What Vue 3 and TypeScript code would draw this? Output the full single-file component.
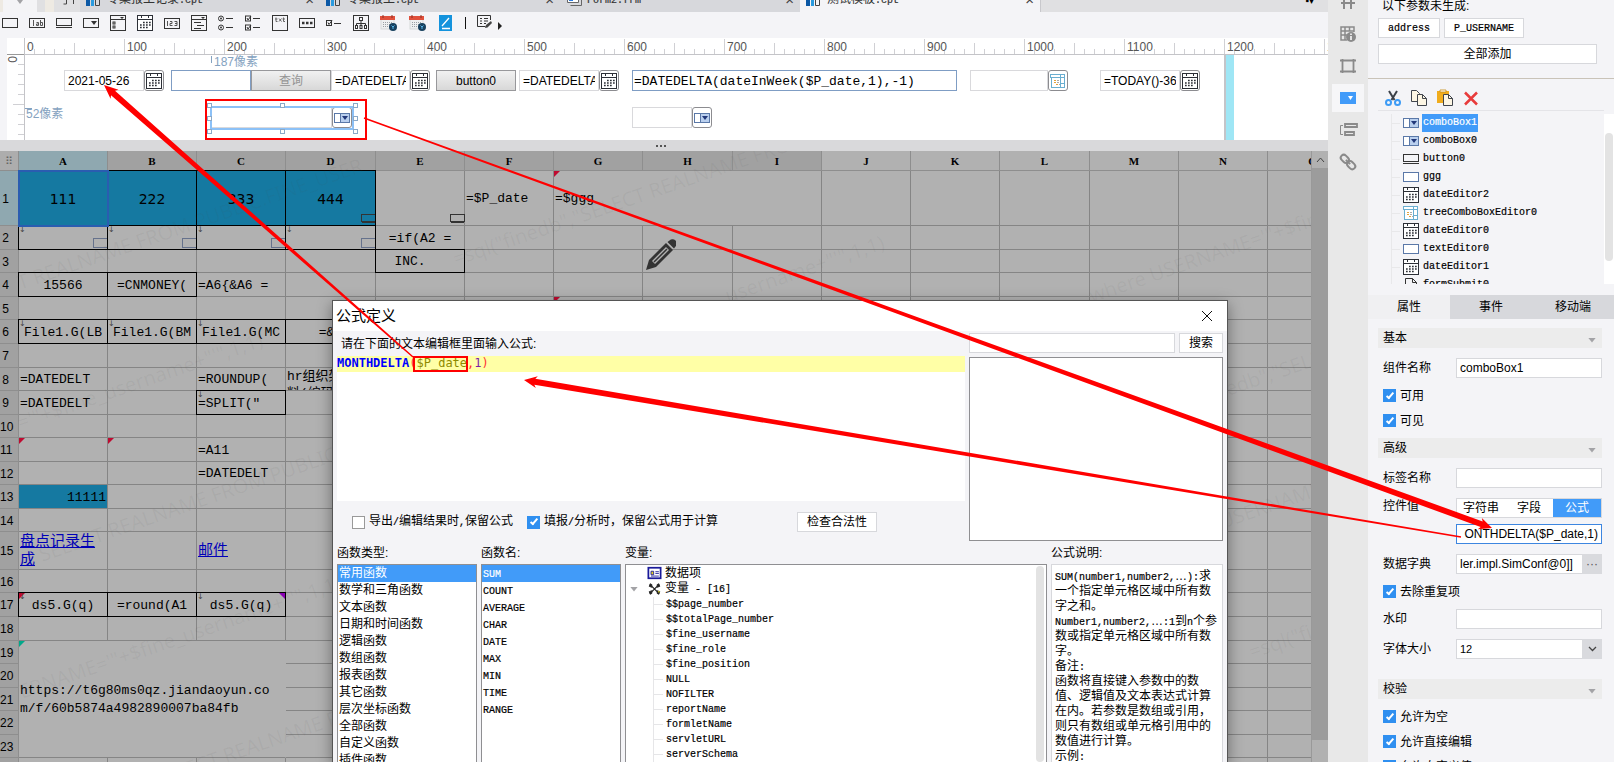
<script setup lang="ts">
import { h } from 'vue'

const Mix = (props: { t: string }) =>
  (props.t.match(/[\x20-\x7e]+|[^\x20-\x7e]+/g) ?? []).map((s) =>
    /^[\x20-\x7e]/.test(s) ? h('span', { class: 'latin' }, s) : h('span', s),
  )
Mix.props = ['t']

const dark = 'fill="none" stroke="#333" stroke-width="1"'
const calendar = `<rect x=".5" y=".5" width="15" height="15" fill="#fff" stroke="#2c2f36"/><path d="M1 4.500h14M4.500 0v3M11.500 0v3" stroke="#2c2f36" fill="none"/><path d="M6 7.500h8M3 10h11M3 12.500h8" stroke="#2c2f36" stroke-width="1.600" stroke-dasharray="1.700 1.300" fill="none"/>`
const reportCalendar = `<rect x="1" y="4" width="13" height="10" fill="#eef0f0" stroke="#d5d9da"/><rect x="0" y="1" width="15" height="4" fill="#e0503c"/><path d="M3 0v3M12 0v3" stroke="#8c2f22"/><path d="M3 7.500h9M3 9.500h7M3 11.500h7" stroke="#9aa0a4" stroke-dasharray="1 1"/><circle cx="13" cy="12" r="4" fill="#17405e"/><path d="M11.500 10.500l1.500 1.500 1.500-1.500M13 12v2" stroke="#58b5e8" fill="none"/>`
const icons: Record<string, string> = {
  text: `<rect x=".5" y="3.500" width="15" height="9" ${dark}/>`,
  label: `<rect x=".5" y="3.500" width="15" height="9" ${dark}/><path d="M4.500 5v6M7.500 7.500h2v3h-2v-1.500h2M11.500 5v5.500h2v-3h-2" fill="none" stroke="#555"/>`,
  button: `<rect x=".5" y="3.500" width="15" height="7" ${dark}/><path d="M0 12.500h16" ${dark}/>`,
  combo: `<rect x=".5" y="3.500" width="15" height="9" ${dark}/><path d="M8 6h6l-3 4z" fill="#333"/>`,
  check: `<rect x=".5" y="0.500" width="15" height="15" ${dark}/><path d="M1 4.500h14" ${dark}/><path d="M10 2h4l-2 2z" fill="#333"/><rect x="3" y="7" width="2" height="2" ${dark}/><rect x="3" y="11" width="2" height="2" ${dark}/>`,
  calendar,
  number: `<rect x=".5" y="3.500" width="15" height="10" ${dark}/><path d="M3.500 6v5M6 6.500h2v2h-2v2h2.500M10.500 6.500h2.500v4h-2.500M11 8.500h2" fill="none" stroke="#555"/>`,
  list: `<rect x=".5" y="0.500" width="15" height="15" ${dark}/><path d="M1 4.500h14M3 7.500h7M6 10.500h7M3 13.500h7" ${dark}/><path d="M10 2h4l-2 2z" fill="#333"/>`,
  radios: `<circle cx="3" cy="3.500" r="2.500" ${dark}/><circle cx="3" cy="12.500" r="2.500" ${dark}/><circle cx="3" cy="3.500" r="1" fill="#333"/><circle cx="3" cy="12.500" r="1" fill="#333"/><path d="M8 3.500h7M8 12.500h7" ${dark}/>`,
  checks: `<rect x=".5" y="1" width="5" height="5" ${dark}/><rect x=".5" y="10" width="5" height="5" ${dark}/><path d="M2 3l1 2 3-4M2 12l1 2 3-4M8 3.500h7M8 12.500h7" ${dark}/>`,
  area: `<rect x=".5" y="0.500" width="15" height="15" ${dark}/><path d="M4 2.500v4h1.500M3 4h2.500M7 3.500l2.500 3M9.500 3.500l-2.500 3M11.500 2.500v4h1.500M10.500 4h2.500" fill="none" stroke="#666"/>`,
  password: `<rect x=".5" y="3.500" width="15" height="9" ${dark}/><path d="M3 8h2.500M7 8h2.500M11 8h2.500" stroke="#333" stroke-width="2.500"/>`,
  single: `<rect x=".5" y="5.500" width="5" height="5" ${dark}/><path d="M2 7.500l1 2 3-4M8 8.500h7" ${dark}/>`,
  tree: `<rect x=".5" y="0.500" width="15" height="15" ${dark}/><rect x="6.500" y="2.500" width="3" height="3" ${dark}/><path d="M8 6v5M3.500 11V8.500h9V11" ${dark}/><rect x="2.500" y="10.500" width="2" height="3" ${dark}/><rect x="7" y="10.500" width="2" height="3" ${dark}/><rect x="11.500" y="10.500" width="2" height="3" ${dark}/>`,
  reportCalendar,
  sign: `<rect x="1" y="0" width="13" height="16" fill="#1493dd"/><path d="M4 11L11 3M4 13.500h8" stroke="#fff" stroke-width="1.300"/>`,
  form: `<path d="M13.500 5V.5h-13v11h8" ${dark}/><path d="M3 3.500h2M7 3.500h4M3 6h2M7 6h4M3 8.500h2M7 8.500h2" ${dark}/><path d="M8 13l1-3 5-4 1 2-4.500 4.500z" fill="#444"/>`,
  comboBlue: `<rect x=".5" y="3.500" width="15" height="9" fill="#fff" stroke="#5a78a8"/><rect x="6.500" y="3.500" width="9" height="9" fill="#b9cfee" stroke="#5a78a8"/><path d="M8 6h6l-3 4z" fill="#22387a"/>`,
  textBlue: `<rect x=".5" y="3.500" width="15" height="9" fill="#fff" stroke="#5a78a8"/>`,
  treeCombo: `<rect x=".5" y="1.500" width="10" height="3" fill="#fff" stroke="#6aaed0"/><rect x="10.500" y="1.500" width="4" height="3" fill="#fff" stroke="#6aaed0"/><rect x="1.500" y="4.500" width="13" height="10" fill="#fff" stroke="#6aaed0"/><path d="M4 7.500h2M4 9.500h2M6 11.500h2" stroke="#e5a33a"/><path d="M7 7.500h2M7 9.500h2M9 11.500h1" stroke="#aaa"/><path d="M10.500 5v9M11 10.500h4" stroke="#6aaed0"/>`,
  submit: `<path d="M2.500 16V1.500h7l4 4V16M9.500 1.500v4h4" ${dark}/>`,
  cut: `<path d="M4 1l5.500 9M12 1L6.500 10" stroke="#3b4048" stroke-width="2"/><circle cx="3.500" cy="12.500" r="2.500" fill="none" stroke="#3d9bf5" stroke-width="2"/><circle cx="12.500" cy="12.500" r="2.500" fill="none" stroke="#3d9bf5" stroke-width="2"/>`,
  copy: `<path d="M.5 11.500V.5h5l3 3v8z" fill="#fdf6e4" stroke="#40454d"/><path d="M6.500 15.500v-11h5l4 4v7z" fill="#fdf6e4" stroke="#40454d"/><path d="M11.500 4.500v4h4" fill="none" stroke="#40454d"/>`,
  paste: `<path d="M0 1h12v12H0z" fill="#f0ac1c"/><path d="M3 0h6v2H3z" fill="#fff" stroke="#c58a10" stroke-width=".8"/><path d="M6.500 15.500v-11h5l4 4v7z" fill="#fdf6e4" stroke="#40454d"/><path d="M11.500 4.500v4h4" fill="none" stroke="#40454d"/>`,
  remove: `<path d="M2 2.500l12 12M14 2.500l-12 12" stroke="#e83b3b" stroke-width="2.500"/>`,
  cpt: `<path d="M0 2h4v12H0z" fill="#0c58a5"/><path d="M5 6h3v8H5z" fill="#2a9be0"/><path d="M9.500 4.500h4v9h-4z" fill="none" stroke="#444"/>`,
  frm: `<path d="M1.500 1.500h11v9h-11z" fill="#fff" stroke="#666"/><path d="M4.500 13.500h11v-9" fill="none" stroke="#666"/><path d="M3 6h4v3H3z" fill="#2a7be0"/>`,
  grid: `<path d="M0 8.500h5M8 8.500h7M4.500 0v14h-3M11.500 0v14" fill="none" stroke="#444"/>`,
  cells: `<path d="M1 4h14M1 9h14M4 0v15M11 0v15" fill="none" stroke="#8a8a8a" stroke-width="2"/>`,
  cellInfo: `<path d="M14 6V1H1v13h6M1 5h13M1 9h6M5 1v13M9.500 1v4" fill="none" stroke="#8a8a8a" stroke-width="1.500"/><circle cx="11" cy="11" r="5" fill="#8a8a8a"/><path d="M11 10v4M11 7.500v1.500" stroke="#fff" stroke-width="1.500"/>`,
  frame: `<path d="M2.500 1v14M13.500 1v14M0 2.500h16M0 13.500h16" fill="none" stroke="#8a8a8a" stroke-width="1.800"/>`,
  widget: `<path d="M0 2h16v12H0z" fill="#419bf9"/><path d="M8 6h5l-2.500 4z" fill="#fff"/>`,
  align: `<path d="M3 3.500H.5v9H3" fill="none" stroke="#8a8a8a"/><path d="M5 2h12v3H5zM5 10h9v3H5z" fill="none" stroke="#8a8a8a" stroke-width="1.800"/>`,
  link: `<g transform="rotate(45 8 8)" fill="none" stroke="#8a8a8a" stroke-width="2"><rect x="-1" y="5" width="9" height="6" rx="3"/><rect x="8" y="5" width="9" height="6" rx="3"/><path d="M5 8h6"/></g>`,
  data: `<rect x="1" y="2" width="14" height="12" fill="#fff" stroke="#1a1a9a" stroke-width="2"/><path d="M4 6h3v4H4z" fill="#e8d21c" stroke="#1a1a9a"/><path d="M9 6.500h4M9 8.500h4M4 11.500h9" stroke="#1a1a9a"/>`,
  vars: `<path d="M5 5l6 6M11 5l-6 6" stroke="#222" stroke-width="1.500"/><path d="M3 2l2 1v3l-3-1zM13 2l-2 1v3l3-1zM3 14l2-1v-3l-3 1zM13 14l-2-1v-3l3 1z" fill="#222" stroke="#222"/><circle cx="13" cy="11" r="1" fill="#c7c02c"/>`,
}

const fileTabs = [
  { icon: 'cpt', name: '专案报工记录.cpt' },
  { icon: 'cpt', name: '专案报工.cpt' },
  { icon: 'frm', name: 'Form2.frm' },
  { icon: 'cpt', name: '测试模板.cpt', active: true },
]
const tools = ['text', 'label', 'button', 'combo', 'check', 'calendar', 'number', 'list', 'radios', 'checks', 'area', 'password', 'single', 'tree', 'reportCalendar', 'reportCalendar', 'sign']

const minorTicks = Array.from({ length: 131 }, (_, i) => i)
const majorTicks = Array.from({ length: 14 }, (_, i) => i * 100)

interface Field { id: string; kind: 'edit' | 'plain' | 'wide' | 'button'; x: number; y: number; w: number; value?: string; icon?: string; off?: boolean }
const fields: Field[] = [
  { id: 'dateEditor0', kind: 'edit', x: 39, y: 15, w: 100, value: '2021-05-26', icon: 'calendar' },
  { id: 'textEditor0', kind: 'plain', x: 146, y: 15, w: 80, value: '' },
  { id: 'formSubmit0', kind: 'button', x: 226, y: 15, w: 80, value: '查询', off: true },
  { id: 'dateEditor1', kind: 'edit', x: 306, y: 15, w: 99, value: '=DATEDELTA()', icon: 'calendar' },
  { id: 'button0', kind: 'button', x: 411, y: 15, w: 80, value: 'button0' },
  { id: 'dateEditor3', kind: 'edit', x: 494, y: 15, w: 100, value: '=DATEDELTA()', icon: 'calendar' },
  { id: 'ggg', kind: 'wide', x: 607, y: 15, w: 325, value: '=DATEDELTA(dateInWeek($P_date,1),-1)' },
  { id: 'treeComboBoxEditor0', kind: 'edit', x: 945, y: 15, w: 98, value: '', icon: 'treeCombo' },
  { id: 'dateEditor2', kind: 'edit', x: 1075, y: 15, w: 100, value: '=TODAY()-36', icon: 'calendar' },
  { id: 'comboBox1', kind: 'edit', x: 186, y: 52, w: 141, value: '', icon: 'comboBlue' },
  { id: 'comboBox0', kind: 'edit', x: 607, y: 52, w: 80, value: '', icon: 'comboBlue' },
]
const handles = [
  [0, 0], [73, 0], [146, 0], [0, 13], [146, 13], [0, 26], [73, 26], [146, 26],
]

const cols = 'ABCDEFGHIJKLMNO'.split('')
const colWidths = [89, 89, 89, 90, 89, 89, 89, 90, 89, 89, 89, 90, 89, 89, 90]
const rowHeights = [55, 24, 23, 24, 23, 24, 24, 23, 24, 23, 24, 23, 24, 23, 38, 23, 24, 24, 23, 24, 23, 24, 23, 24]
interface Cell { t?: string; c?: string; link?: boolean; cs?: number; rs?: number; mark?: string; down?: boolean; box?: 'btn' | 'txt' }
const cells: Record<string, Cell> = {
  A1: { t: '111', c: 'blue big selected' },
  B1: { t: '222', c: 'blue big boxed' },
  C1: { t: '333', c: 'blue big boxed' },
  D1: { t: '444', c: 'blue big boxed', box: 'btn' },
  E1: { box: 'btn' },
  F1: { t: '=$P_date' },
  G1: { t: '=$ggg', cs: 3, mark: 'red' },
  A2: { c: 'boxed', down: true, box: 'txt' },
  B2: { c: 'boxed', down: true, box: 'txt' },
  C2: { c: 'boxed', down: true, box: 'txt' },
  D2: { c: 'boxed', down: true, box: 'txt' },
  E2: { t: '=if(A2 =', c: 'center' },
  E3: { t: 'INC.', c: 'boxed center back' },
  A4: { t: '15566', c: 'boxed center' },
  B4: { t: '=CNMONEY(', c: 'boxed center' },
  C4: { t: '=A6{&A6 =' },
  G5: { mark: 'red' },
  A6: { t: 'File1.G(LB', c: 'boxed center', down: true },
  B6: { t: 'File1.G(BM', c: 'boxed center', down: true },
  C6: { t: 'File1.G(MC', c: 'boxed center', down: true },
  D6: { t: '=&A', c: 'boxed center' },
  A8: { t: '=DATEDELT' },
  C8: { t: '=ROUNDUP(' },
  D8: { t: 'hr组织架\n料(编码)', c: 'tight' },
  A9: { t: '=DATEDELT' },
  C9: { t: '=SPLIT("', c: 'boxed', down: true },
  A11: { mark: 'red' },
  B11: { mark: 'red' },
  C11: { t: '=A11' },
  C12: { t: '=DATEDELT' },
  A13: { t: '11111', c: 'blue end' },
  A15: { t: '盘点记录生\n成', link: true },
  C15: { t: '邮件', link: true },
  A17: { t: 'ds5.G(q)', c: 'boxed center', down: true, mark: 'red' },
  B17: { t: '=round(A1', c: 'boxed center' },
  C17: { t: 'ds5.G(q)', c: 'boxed center', down: true, mark: 'purple' },
  A19: { t: 'https://t6g80ms0qz.jiandaoyun.co\nm/f/60b5874a4982890007ba84fb', cs: 3, rs: 5, mark: 'teal', c: 'open' },
}
const covered = (col: string, row: number) =>
  (row === 1 && 'HI'.includes(col)) ||
  (row >= 19 && row <= 23 && ('BC'.includes(col) || (col === 'A' && row > 19)))
const cellAt = (col: string, row: number): Cell => cells[col + row] ?? {}

const watermarks = [
  { x: 20, y: 139, t: 'T REALNAME FROM PUBLIC.FINE_USER' },
  { x: 20, y: 279, t: `='"+$fine_username+"'",1,1)` },
  { x: 42, y: 411, t: 'SELECT REALNAME FROM PUBLIC.FINE' },
  { x: 22, y: 548, t: `ERNAME='"+$fine_username+"'",1,1)` },
  { x: 188, y: 625, t: 'ECT REALNAME FROM PUBLIC' },
  { x: 456, y: 115, t: '=sql("finedb","SELECT REALNAME FROM' },
  { x: 728, y: 152, t: `username+"'",1,1)` },
  { x: 1092, y: 152, t: `where USERNAME='"+$fine` },
  { x: 1205, y: 253, t: `finedb","SELECT REAL` },
  { x: 1222, y: 378, t: 'USERNAME' },
  { x: 1252, y: 508, t: '=sql("finedb"' },
]

const functionTypes = ['常用函数', '数学和三角函数', '文本函数', '日期和时间函数', '逻辑函数', '数组函数', '报表函数', '其它函数', '层次坐标函数', '全部函数', '自定义函数', '插件函数']
const functionNames = ['SUM', 'COUNT', 'AVERAGE', 'CHAR', 'DATE', 'MAX', 'MIN', 'TIME', 'RANGE']
const variables = ['$$page_number', '$$totalPage_number', '$fine_username', '$fine_role', '$fine_position', 'NULL', 'NOFILTER', 'reportName', 'formletName', 'servletURL', 'serverSchema']
const description = ['SUM(number1,number2,…):求', '一个指定单元格区域中所有数', '字之和。', 'Number1,number2,…:1到n个参', '数或指定单元格区域中所有数', '字。', '备注:', '函数将直接键入参数中的数', '值、逻辑值及文本表达式计算', '在内。若参数是数组或引用，', '则只有数组或单元格引用中的', '数值进行计算。', '示例:']

const widgets = [
  ['comboBlue', 'comboBox1'], ['comboBlue', 'comboBox0'], ['button', 'button0'], ['textBlue', 'ggg'],
  ['calendar', 'dateEditor2'], ['treeCombo', 'treeComboBoxEditor0'], ['calendar', 'dateEditor0'],
  ['textBlue', 'textEditor0'], ['calendar', 'dateEditor1'], ['submit', 'formSubmit0'],
]
const railIcons = ['cells', 'cellInfo', 'frame', 'widget', 'align', 'link']

function arrow(x1: number, y1: number, x2: number, y2: number, head: number, w: number): string {
  const len = Math.hypot(x2 - x1, y2 - y1)
  const ux = (x2 - x1) / len
  const uy = (y2 - y1) / len
  const at = (back: number, side: number) => `${x2 - ux * back - uy * side},${y2 - uy * back + ux * side}`
  return [at(len, 0.7), at(head - 2, w / 2), at(head, w), at(0, 0), at(head, -w), at(head - 2, -w / 2), at(len, -0.7)].join(' ')
}
const arrows = [
  arrow(413, 357, 104, 85, 14, 6),
  arrow(364, 118, 1492, 528, 13, 6),
  arrow(1461, 537, 524, 380, 13, 6),
]
</script>

<template>
  <div class="app">
    <main class="main">
      <nav class="file-tabs">
        <button class="tab-start" aria-label="Menu"><i class="caret"></i></button>
        <div class="tab-tool"><svg class="ic" viewBox="0 0 16 16" v-html="icons.grid" /></div>
        <div v-for="f in fileTabs" :key="f.name" class="file-tab" :class="{ active: f.active }">
          <svg class="ic" viewBox="0 0 16 16" v-html="icons[f.icon]" />
          <span class="file-name"><Mix :t="f.name" /></span>
          <button class="close" aria-label="Close">×</button>
        </div>
        <div class="tab-rest"><span>▪▾</span></div>
      </nav>
      <div class="toolbar">
        <button v-for="(t, i) in tools" :key="i" class="tool" :class="{ spaced: i > 14 }" :aria-label="t"><svg class="ic" viewBox="0 0 16 16" v-html="icons[t]" /></button>
        <i class="bar"></i>
        <button class="tool" aria-label="form"><svg class="ic" viewBox="0 0 16 16" v-html="icons.form" /></button>
        <i class="caret-right"></i>
      </div>

      <section class="designer">
        <div class="ruler-left">
          <svg width="17" height="102">
            <path d="M0 16.500h17" stroke="#999" />
            <path d="M11 26.500h6M11 36.500h6M11 46.500h6M11 56.500h6M6 66.500h11M11 76.500h6M11 86.500h6M11 96.500h6" stroke="#d0d0d4" />
            <text x="0" y="0" transform="translate(1 18) rotate(90)" class="rule-text">0</text>
          </svg>
        </div>
        <div class="canvas-side">
          <svg class="ruler" height="17" width="100%">
            <path v-for="n in minorTicks" :key="n" :d="`M${n * 10 - 1 + 0.5} ${n % 10 === 0 ? 1 : n % 5 === 0 ? 5 : 11}v16`" stroke="#d0d0d4" />
            <text v-for="n in majorTicks" :key="n" :x="n + 2" y="13" class="rule-text">{{ n }}</text>
            <path d="M0 16.500h1400" stroke="#c4c4c8" />
          </svg>
          <div class="canvas">
            <span class="dim dim-x">187像素</span>
            <span class="dim dim-y">52像素</span>
            <template v-for="f in fields" :key="f.id">
              <button v-if="f.kind === 'button'" class="place btn" :class="{ off: f.off }" :style="{ left: f.x + 'px', top: f.y + 'px', width: f.w + 'px' }">{{ f.value }}</button>
              <input v-else-if="f.kind !== 'edit'" class="place plain" :class="f.kind" :aria-label="f.id" :value="f.value" :style="{ left: f.x + 'px', top: f.y + 'px', width: f.w + 'px' }" />
              <div v-else class="place edit" :style="{ left: f.x + 'px', top: f.y + 'px', width: f.w + 'px' }">
                <input :aria-label="f.id" :value="f.value" />
                <button :aria-label="f.id + ' open'"><svg class="ic" viewBox="0 0 16 16" v-html="icons[f.icon!]" /></button>
              </div>
            </template>
            <div class="selection">
              <i v-for="(p, i) in handles" :key="i" :style="{ left: p[0] + 'px', top: p[1] + 'px' }"></i>
            </div>
            <div class="edge"></div>
          </div>
        </div>
      </section>
      <div class="splitter"><i></i><i></i><i></i></div>

      <section class="sheet">
        <div class="sheet-view">
          <table class="grid">
            <colgroup>
              <col class="head-col" />
              <col v-for="(w, i) in colWidths" :key="i" :style="{ width: w + 'px' }" />
            </colgroup>
            <thead>
              <tr>
                <th class="corner">⠿</th>
                <th v-for="(c, i) in cols" :key="c" :class="{ on: i === 0, pale: i > 8 }">{{ c }}</th>
              </tr>
            </thead>
            <tbody>
              <tr v-for="(rh, r) in rowHeights" :key="r" :style="{ height: rh + 'px' }">
                <th :class="{ on: r === 0 }">{{ r + 1 }}</th>
                <template v-for="c in cols" :key="c">
                  <td v-if="!covered(c, r + 1)" :class="cellAt(c, r + 1).c" :colspan="cellAt(c, r + 1).cs" :rowspan="cellAt(c, r + 1).rs">
                    <div v-if="cellAt(c, r + 1).t" class="cell" :style="{ maxHeight: rh * (cellAt(c, r + 1).rs ?? 1) - 1 + 'px' }">
                      <a v-if="cellAt(c, r + 1).link" href="#">{{ cellAt(c, r + 1).t }}</a>
                      <template v-else>{{ cellAt(c, r + 1).t }}</template>
                    </div>
                    <i v-if="cellAt(c, r + 1).mark" class="mark" :class="cellAt(c, r + 1).mark"></i>
                    <i v-if="cellAt(c, r + 1).down" class="down">↓</i>
                    <i v-if="cellAt(c, r + 1).box" class="mini" :class="cellAt(c, r + 1).box"></i>
                  </td>
                </template>
              </tr>
            </tbody>
          </table>
          <svg class="watermarks" width="100%" height="100%">
            <text v-for="(w, i) in watermarks" :key="i" :transform="`translate(${w.x} ${w.y}) rotate(-19)`">{{ w.t }}</text>
          </svg>
          <svg class="pencil" viewBox="0 0 30 31" width="30" height="31">
            <path d="M0 31L3 21L20 4l7 7L10 28z" fill="#333" />
            <path d="M6 22L20 8l3 3L9 25z" fill="#b1b1b1" />
            <path d="M8 23L21 10" stroke="#333" stroke-width="1.500" />
            <path d="M21.500 3l2-1.500a4 4 0 0 1 6 6L28 9.500z" fill="#333" />
          </svg>
        </div>
        <div class="scrollbar"><button aria-label="Scroll up"><svg width="9" height="6"><path d="M1 5l3.500-4L8 5" fill="none" stroke="#444" /></svg></button><i></i></div>
      </section>
    </main>

    <nav class="rail">
      <button v-for="r in railIcons" :key="r" :class="{ on: r === 'widget' }" :aria-label="r"><svg class="ic" viewBox="0 0 16 16" v-html="icons[r]" /></button>
    </nav>

    <aside class="panel">
      <div class="params">
        <p>以下参数未生成:</p>
        <div class="chips"><button><span class="latin">address</span></button><button><span class="latin">P_USERNAME</span></button></div>
        <button class="add-all">全部添加</button>
      </div>
      <div class="widget-tools">
        <button v-for="n in ['cut', 'copy', 'paste', 'remove']" :key="n" :aria-label="n"><svg class="ic" viewBox="0 0 16 16" v-html="icons[n]" /></button>
      </div>
      <div class="widget-box">
        <ul class="widget-tree">
          <li v-for="(w, i) in widgets" :key="w[1]" :class="{ on: i === 0 }"><svg class="ic" viewBox="0 0 16 16" v-html="icons[w[0]]" /><span class="latin">{{ w[1] }}</span></li>
        </ul>
        <div class="thumb"><i></i></div>
      </div>
      <div class="panel-tabs"><button class="on">属性</button><button>事件</button><button>移动端</button></div>
      <form class="props" @submit.prevent>
        <h3>基本<i class="caret"></i></h3>
        <div class="row"><label for="p-name">组件名称</label><input id="p-name" value="comboBox1" /></div>
        <label class="tick"><input type="checkbox" checked />可用</label>
        <label class="tick"><input type="checkbox" checked />可见</label>
        <h3>高级<i class="caret"></i></h3>
        <div class="row"><label for="p-label">标签名称</label><input id="p-label" value="" /></div>
        <div class="row first">
          <label for="p-value">控件值</label>
          <div class="stack">
            <div class="seg"><button>字符串</button><button>字段</button><button class="on">公式</button></div>
            <input id="p-value" class="focus" value="ONTHDELTA($P_date,1)" />
          </div>
        </div>
        <div class="row"><label for="p-dict">数据字典</label><div class="joined"><input id="p-dict" value="ler.impl.SimConf@0]]" /><button>···</button></div></div>
        <label class="tick"><input type="checkbox" checked />去除重复项</label>
        <div class="row"><label for="p-mark">水印</label><input id="p-mark" value="" /></div>
        <div class="row"><label for="p-size">字体大小</label>
          <div class="joined"><select id="p-size"><option>12</option></select><span class="drop"><svg width="9" height="6"><path d="M1 1l3.500 3.500L8 1" fill="none" stroke="#444" stroke-width="1.300" /></svg></span></div>
        </div>
        <h3 class="gap">校验<i class="caret"></i></h3>
        <label class="tick"><input type="checkbox" checked />允许为空</label>
        <label class="tick"><input type="checkbox" checked />允许直接编辑</label>
        <label class="tick"><input type="checkbox" checked />允许自定义值</label>
      </form>
    </aside>

    <section class="dialog" role="dialog" aria-label="公式定义">
      <header><h2>公式定义</h2><button aria-label="Close"><svg width="12" height="12"><path d="M1 1l10 10M11 1L1 11" stroke="#111" /></svg></button></header>
      <div class="top">
        <div class="left">
          <label class="hint" for="formula">请在下面的文本编辑框里面输入公式:</label>
          <div id="formula" class="editor" contenteditable="true" spellcheck="false"><div class="line"><b>MONTHDELTA</b><span class="paren">(</span><span class="param">$P_date</span><span class="paren">,</span><span class="num">1</span><span class="paren">)</span></div></div>
          <div class="options">
            <label class="tick"><input type="checkbox" /><span><Mix t="导出/编辑结果时,保留公式" /></span></label>
            <label class="tick"><input type="checkbox" checked /><span><Mix t="填报/分析时，保留公式用于计算" /></span></label>
            <button class="light">检查合法性</button>
          </div>
        </div>
        <div class="right">
          <div class="search"><input aria-label="搜索" /><button class="light">搜索</button></div>
          <div class="results"></div>
        </div>
      </div>
      <div class="lists">
        <div class="col type"><h4>函数类型:</h4><ul><li v-for="(f, i) in functionTypes" :key="f" :class="{ on: i === 0 }">{{ f }}</li></ul></div>
        <div class="col name"><h4>函数名:</h4><ul><li v-for="(f, i) in functionNames" :key="f" :class="{ on: i === 0 }"><span class="latin">{{ f }}</span></li></ul></div>
        <div class="col vars">
          <h4>变量:</h4>
          <div class="var-box">
            <ul>
              <li class="node"><svg class="ic" viewBox="0 0 16 16" v-html="icons.data" />数据项</li>
              <li class="node open"><i class="caret"></i><svg class="ic" viewBox="0 0 16 16" v-html="icons.vars" /><span><Mix t="变量 - [16]" /></span></li>
              <li v-for="v in variables" :key="v" class="leaf"><span class="latin">{{ v }}</span></li>
            </ul>
            <i class="var-thumb"></i>
          </div>
        </div>
        <div class="col help"><h4>公式说明:</h4><div class="desc"><p v-for="d in description" :key="d"><Mix :t="d" /></p></div></div>
      </div>
    </section>

    <svg class="notes" width="1614" height="762" viewBox="0 0 1614 762">
      <polygon v-for="(a, i) in arrows" :key="i" :points="a" fill="#f00" />
      <rect x="206" y="100" width="160" height="39" fill="none" stroke="#f00" stroke-width="2" />
      <rect x="414" y="357" width="53" height="14" fill="none" stroke="#f00" stroke-width="2" />
    </svg>
  </div>
</template>

<style>
html, body { margin: 0; overflow: hidden; }
.latin { font-family: "Liberation Mono", monospace; font-size: 10px; -webkit-text-stroke: 0.2px currentColor; white-space: pre; }
</style>

<style scoped>
.app { position: relative; display: flex; height: 100vh; overflow: hidden; background: #f4f4f7; color: #000; font: 12px/16px "Liberation Sans", "Noto Sans CJK SC", sans-serif; }
.app *, .app *::before, .app *::after { box-sizing: border-box; }
button, input, select { font: inherit; color: inherit; margin: 0; padding: 0; border: 0; border-radius: 0; background: none; outline: 0; min-width: 0; }
h2, h3, h4, p, ul { margin: 0; padding: 0; font-weight: 400; font-size: inherit; list-style: none; }
i { font-style: normal; }
.ic { display: block; width: 16px; height: 16px; flex: none; overflow: visible; }
.caret { width: 8px; height: 5px; background: #a3a3a6; clip-path: polygon(0 0, 100% 0, 50% 100%); }

.main { flex: 1; min-width: 0; display: flex; flex-direction: column; }
.file-tabs { display: flex; height: 12px; background: #e0e0e2; overflow: hidden; }
.file-tabs > * { flex: none; height: 12px; }
.tab-start { width: 37px; margin-right: 8px; border-left: 3px solid #eeeae3; background: #f4f4f6; display: flex; justify-content: center; }
.tab-start .caret { height: 4px; width: 6px; }
.tab-tool { width: 35px; padding-left: 17px; background: linear-gradient(90deg, #eeeae3 9px, #e0e0e2 9px); }
.tab-tool .ic { margin-top: -10px; }
.file-tab { width: 240px; padding: 0 6px; display: flex; align-items: center; gap: 5px; background: #d7d8dc; color: #333; }
.file-tab.active { background: #f4f4f7; }
.file-tab > * { margin-top: -12px; }
.file-name { flex: 1; white-space: nowrap; }
.close { font-size: 15px; line-height: 14px; color: #444; }
.tab-rest { flex: 1; text-align: right; padding-right: 14px; font-size: 10px; line-height: 2px; border-left: 1px solid #c8c8cc; }
.toolbar { display: flex; align-items: center; gap: 11px; height: 26px; padding: 0 2px 4px; }
.tool { width: 16px; height: 16px; }
.spaced { margin-left: 2px; }
.bar { width: 1px; height: 12px; background: #111; }
.caret-right { width: 4px; height: 8px; margin: 6px 0 0 -6px; background: #222; clip-path: polygon(0 0, 100% 50%, 0 100%); }

.designer { display: flex; height: 102px; padding-left: 7px; }
.ruler-left { width: 17px; background: #fff; overflow: hidden; }
.ruler-left svg { display: block; }
.rule-text { font: 12px "Liberation Sans", sans-serif; fill: #555; }
.canvas-side { flex: 1; min-width: 0; border-left: 1px solid #c4c4c8; background: #fff; overflow: hidden; }
.ruler { display: block; }
.canvas { position: relative; height: 85px; }
.edge { position: absolute; left: 1199px; top: 0; width: 10px; height: 85px; border-left: 2px solid #c4c4c8; background: #9fe6f5; }
.dim { position: absolute; color: #84a2c0; font-size: 12px; line-height: 12px; white-space: nowrap; }
.dim-x { left: 186px; top: 1px; padding: 0 0 0 3px; background: linear-gradient(#84a2c0, #84a2c0) no-repeat 0 0 / 1px 7px; }
.dim-y { left: 0; top: 53px; padding: 0 0 0 1px; background: linear-gradient(#84a2c0, #84a2c0) no-repeat 0 0 / 7px 1px; }
.place { position: absolute; height: 21px; }
.edit { display: flex; }
.edit input { flex: 1; border: 1px solid #d9d9dc; background: #fff; padding: 0 3px; }
.edit button { width: 20px; border: 1px solid #8c8c90; border-radius: 3px; background: #fff; padding: 0 1px; }
.plain { border: 1px solid #7f9dc4; background: #fff; }
.wide { font: 13px "Liberation Mono", monospace; padding: 2px 1px 0; }
.btn { border: 1px solid #98989b; background: linear-gradient(#f1f1f1, #d8d8d8); }
.btn.off { color: #949494; }
.selection { position: absolute; left: 184px; top: 50px; width: 149px; height: 27px; }
.selection::before { content: ""; position: absolute; left: 1px; top: 1px; width: 144px; height: 24px; border: 2px solid #8cc1f7; }
.selection i { position: absolute; width: 5px; height: 5px; margin: -2px 0 0 -2px; border: 1px solid #8aa9c8; background: #fff; }
.splitter { height: 11px; flex: none; background: #d9d9db; display: flex; gap: 2px; align-items: center; justify-content: center; padding-right: 6px; }
.splitter i { width: 2px; height: 2px; background: #555; }

.sheet { flex: 1; min-height: 0; display: flex; background: #b1b1b1; }
.sheet-view { position: relative; flex: 1; min-width: 0; overflow: hidden; }
.grid { table-layout: fixed; width: 1358px; border-collapse: separate; border-spacing: 0; font: 13px/18px "Liberation Mono", "Noto Sans CJK SC", monospace; }
.head-col { width: 19px; }
.grid thead tr { height: 20px; }
.grid th, .grid td { position: relative; padding: 0; height: inherit; border: 0 solid #858585; border-width: 0 1px 1px 0; }
.grid th { background: #a1a1a1; border-color: #8e8e8e; }
.grid thead th { font: bold 11px/14px "Liberation Serif", serif; padding-top: 1px; }
.grid thead th.pale { background: #b1b1b1; }
.grid tbody th { font: 12px/14px "Liberation Sans", sans-serif; padding: 1px 7px 0 0; }
.grid tbody th, .corner { white-space: nowrap; }
.grid th.on, .grid tbody th.on { background: #8fa8b0; }
.grid thead th.corner { color: #666; background: #adadad; font-weight: 400; }
.cell { white-space: pre; overflow: hidden; padding: 2px 1px 0; }
.tight .cell { line-height: 17px; padding-top: 0; }
.cell a { color: #0000b8; font-size: 15px; }
.grid td.center .cell { text-align: center; padding: 2px 0 0; }
.grid td.end { text-align: right; }
.grid td.back .cell { padding-right: 20px; }
.grid td.blue { background: #1579a1; }
.grid td.big .cell { font: 14px/18px "DejaVu Sans", sans-serif; text-align: center; }
.grid td.boxed::after { content: ""; position: absolute; inset: -1px; border: 1px solid #000; pointer-events: none; }
.grid td.selected::after { content: ""; position: absolute; inset: -1px -2px -2px -1px; border: 2px solid #2a5db0; z-index: 1; }
.grid td.open { border-right-color: transparent; }
.mark { position: absolute; left: 0; top: 0; width: 6px; height: 6px; background: #bf0a30; clip-path: polygon(0 0, 100% 0, 0 100%); }
.mark.teal { background: #00a88a; }
.mark.purple { left: auto; right: 0; background: #8a00b4; clip-path: polygon(0 0, 100% 0, 100% 100%); }
.down { position: absolute; left: 0; top: 0; font: 8px/7px "DejaVu Sans", sans-serif; color: #444; }
.mini { position: absolute; right: -1px; bottom: 1px; width: 15px; height: 10px; border: 1px solid #66728c; }
.mini.btn { bottom: 3px; height: 8px; border-color: #333; background: none; box-shadow: 0 2px 0 -1px #333; }
.watermarks { position: absolute; inset: 0; pointer-events: none; }
.watermarks text { font: 20px "Noto Sans", sans-serif; fill: rgba(80, 80, 80, 0.06); white-space: pre; }
.pencil { position: absolute; left: 646px; top: 88px; }
.scrollbar { width: 17px; background: #b1b1b1; border-left: 1px solid #999; display: flex; flex-direction: column; }
.scrollbar button { height: 17px; display: flex; align-items: center; justify-content: center; }
.scrollbar i { flex: 1; background: #9c9c9c; margin-bottom: 22px; }

.rail { width: 40px; flex: none; background: #e8e8e8; display: flex; flex-direction: column; align-items: center; gap: 4px; overflow: hidden; }
.rail button { width: 32px; height: 28px; flex: none; display: grid; place-items: center; }
.rail button:first-child { margin-top: -12px; }
.rail button.on { background: #f6f6f8; }

.panel { width: 246px; flex: none; display: flex; flex-direction: column; overflow: hidden; }
.params { padding: 0 17px 14px 10px; height: 79px; border-bottom: 1px solid #c9c3b8; flex: none; }
.params p { padding-left: 4px; margin-top: -2px; }
.chips { display: flex; gap: 4px; margin: 4px 0 6px; }
.chips button, .add-all, .light { height: 20px; border: 1px solid #d7d8dc; background: #fff; text-align: center; white-space: nowrap; }
.chips button { padding: 0 9px; }
.add-all { display: block; width: 100%; line-height: 18px; }
.widget-tools { display: flex; gap: 10px; height: 32px; margin: 0 10px 3px; padding: 11px 0 0 7px; border-bottom: 1px solid #e4e4e8; flex: none; }
.widget-tools button { width: 16px; height: 16px; }
.widget-box { display: flex; height: 170px; flex: none; overflow: hidden; }
.widget-tree { flex: 1; margin-left: 23px; border-left: 1px solid #e8e8ea; }
.widget-tree li { display: flex; align-items: center; gap: 3px; height: 18px; }
.widget-tree li::before { content: ""; width: 8px; height: 1px; background: #e8e8ea; }
.widget-tree span { padding: 0 1px; line-height: 18px; }
.widget-tree .on span { background: #419bf9; color: #fff; }
.thumb { width: 10px; background: #fff; padding-top: 19px; }
.thumb i { display: block; width: 8px; height: 128px; margin-left: 1px; border-radius: 4px; background: #e3e3e3; }
.panel-tabs { display: flex; height: 24px; margin-top: 11px; flex: none; background: #d7d8dc; }
.panel-tabs button { flex: 1; }
.panel-tabs .on { background: #f0f0f2; }
.props { display: flex; flex-direction: column; gap: 10px; padding: 9px 12px 0 10px; }
.props > * { flex: none; }
.props h3 { display: flex; align-items: center; justify-content: space-between; height: 20px; padding: 0 6px 0 5px; background: #ececec; }
.props h3 .caret { margin-top: 4px; }
.props .gap { margin-top: 10px; }
.row { display: grid; grid-template-columns: 73px 1fr; padding-left: 5px; align-items: center; min-height: 20px; }
.row.first { align-items: start; }
.row input, .row select { width: 100%; height: 20px; border: 1px solid #d7d8dc; background: #fff; padding: 0 3px; }
.stack { display: grid; gap: 6px; }
.row .focus { border-color: #3d86e0; text-align: right; }
.seg { display: flex; height: 20px; border: 1px solid #d7d8dc; background: #fff; }
.seg button { flex: 1; }
.seg .on { background: #419bf9; color: #fff; }
.joined { display: flex; }
.joined input { flex: 1; border-right: 0; }
.joined select { flex: 1; appearance: none; border-right: 0; font-size: 11px; }
.joined button, .drop { width: 20px; height: 20px; flex: none; background: #d9dade; display: grid; place-items: center; color: #555; }
.tick { display: flex; align-items: center; gap: 4px; height: 15px; padding-left: 5px; white-space: nowrap; }
.tick input { appearance: none; width: 13px; height: 13px; border: 1px solid #999; background: #fff; display: grid; place-items: center; flex: none; }
.tick input:checked { background: #2f8ff0; border-color: #2f8ff0; }
.tick input:checked::after { content: ""; width: 4px; height: 8px; margin-top: -2px; border: solid #fff; border-width: 0 2px 2px 0; transform: rotate(40deg); }

.dialog { position: absolute; left: 332px; top: 300px; bottom: 0; width: 896px; display: flex; flex-direction: column; overflow: hidden; border: 1px solid #555; border-bottom: 0; background: #f4f4f7; box-shadow: 0 4px 14px rgba(0, 0, 0, 0.4); }
.dialog header { display: flex; align-items: center; justify-content: space-between; height: 30px; flex: none; padding: 0 14px 0 3px; background: #fff; }
.dialog h2 { font-size: 15px; }
.dialog header svg { display: block; }
.top { display: flex; gap: 4px; height: 210px; flex: none; padding: 0 4px; }
.left { flex: 1; display: flex; flex-direction: column; }
.left > * { flex: none; }
.hint { height: 25px; line-height: 27px; padding-left: 4px; }
.editor { height: 145px; background: #fff; outline: 0; font: 12px/14px "DejaVu Sans Mono", monospace; }
.line { height: 16px; background: #ffffa6; }
.line b { color: #00f; }
.paren { color: #f33; }
.param { color: #8f8a00; }
.num { color: #7a1fa8; }
.options { display: flex; align-items: center; height: 42px; padding-left: 10px; }
.options .tick + .tick { margin-left: 9px; }
.options .light { width: 80px; margin-left: auto; margin-right: 88px; }
.right { width: 254px; display: flex; flex-direction: column; gap: 4px; padding-top: 2px; }
.search { display: flex; gap: 4px; height: 20px; }
.search input { flex: 1; border: 1px solid #d7d8dc; background: #fff; }
.search button { width: 44px; }
.results { flex: 1; border: 1px solid #8f8f92; background: #fff; }
.lists { flex: 1; min-height: 0; display: flex; gap: 4px; padding: 3px 4px 0; }
.col { display: flex; flex-direction: column; min-height: 0; }
.type, .name { width: 140px; }
.vars { flex: 1; }
.help { width: 172px; }
.col h4 { height: 20px; line-height: 18px; flex: none; }
.type ul, .name ul, .var-box { flex: 1; min-height: 0; overflow: hidden; border: 1px solid #8f8f92; border-bottom: 0; background: #fff; }
.type li, .name li { height: 17px; line-height: 17px; padding-left: 1px; }
.type .on, .name .on { background: #419bf9; color: #fff; }
.var-box { position: relative; display: flex; }
.var-box ul { flex: 1; }
.node { display: flex; align-items: center; gap: 3px; height: 16px; padding-left: 21px; }
.node .ic { width: 15px; height: 14px; }
.node.open { padding-left: 4px; }
.node.open .caret { margin-right: 6px; }
.leaf { height: 15px; line-height: 15px; margin-left: 27px; padding-left: 12px; border-left: 1px solid #e6e6e8; background: linear-gradient(#e6e6e8, #e6e6e8) no-repeat 0 7px / 9px 1px; }
.leaf span { display: block; line-height: 16px; }
.var-thumb { width: 8px; margin: 1px 2px 0 0; border-radius: 4px; background: #e3e3e3; }
.desc { flex: 1; min-height: 0; overflow: hidden; border: 1px solid #d7d8dc; border-bottom: 0; background: #fff; padding: 4px 3px; }
.desc p { height: 15px; line-height: 15px; white-space: nowrap; }
.notes { position: absolute; left: 0; top: 0; pointer-events: none; z-index: 5; }
</style>
